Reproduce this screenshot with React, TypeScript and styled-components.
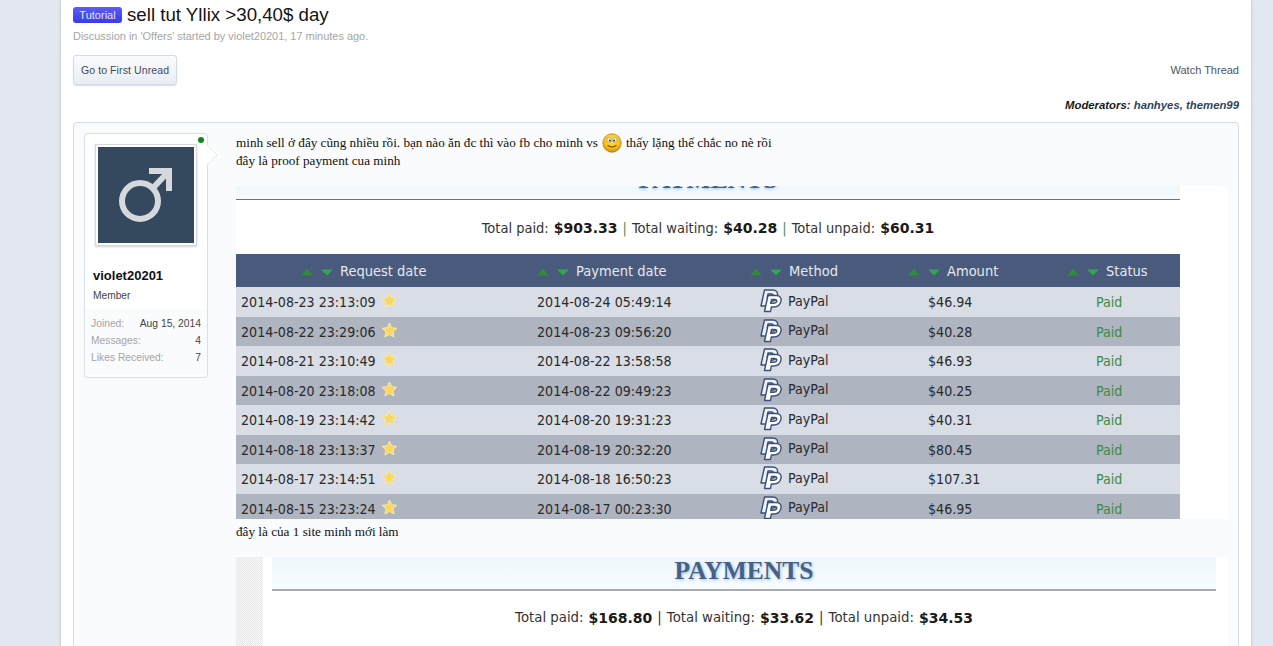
import React from 'react'
import styled, { createGlobalStyle } from 'styled-components'

const GlobalStyle = createGlobalStyle`
    html, body {
        margin: 0;
        height: 646px;
        overflow: hidden;
        background: #e2e7f0;
        font-family: "Liberation Sans", Arial, sans-serif;
    }
`;

const Page = styled.div`
    box-sizing: border-box;
    width: 1190px;
    height: 646px;
    margin-left: 61px;
    padding: 4px 12px 0;
    overflow: hidden;
    background: #fff;
    box-shadow: 0 0 3px rgba(140, 150, 175, 0.55);
`;

const TitleRow = styled.div`
    display: flex;
    align-items: center;
    gap: 5px;
    height: 22px;
`;

const Prefix = styled.span`
    box-sizing: border-box;
    width: 49px;
    height: 16px;
    border-radius: 3px;
    background: linear-gradient(#5c5cf6, #3a3aee);
    color: #e6e6ff;
    font-size: 11px;
    line-height: 16px;
    text-align: center;
`;

const Title = styled.h1`
    margin: 0;
    color: #141414;
    font-size: 18.7px;
    font-weight: normal;
`;

const Meta = styled.div`
    margin-top: 3px;
    color: #a5a5a5;
    font-size: 10.95px;
    line-height: 14px;
`;

const Actions = styled.div`
    display: flex;
    align-items: center;
    justify-content: space-between;
    margin-top: 12px;
`;

const Button = styled.button`
    box-sizing: border-box;
    width: 104px;
    height: 30px;
    padding: 0;
    border: 1px solid #d3dbe6;
    border-radius: 3px;
    background: linear-gradient(#fbfcfe, #e8edf4);
    box-shadow: 0 1px 1px rgba(150, 160, 180, 0.35);
    color: #3f4a5e;
    font-family: inherit;
    font-size: 10.5px;
    letter-spacing: 0.1px;
`;

const TextLink = styled.span`
    color: #4a5568;
    font-size: 11px;
`;

const Moderators = styled.div`
    margin-top: 13px;
    color: #1a1a1a;
    font-size: 11.35px;
    font-style: italic;
    font-weight: bold;
    line-height: 14px;
    text-align: right;

    span {
        color: #2f4560;
    }
`;

const Post = styled.div`
    display: flex;
    gap: 28px;
    box-sizing: border-box;
    height: 540px;
    margin-top: 10px;
    padding: 10px 10px 0;
    border: 1px solid #d3dbe6;
    border-radius: 4px;
    background: #f9fbfd;
`;

const UserCard = styled.div`
    position: relative;
    box-sizing: border-box;
    display: flex;
    flex-direction: column;
    flex: 0 0 124px;
    height: 245px;
    overflow: visible;
    border: 1px solid #d5e0ea;
    border-radius: 4px;
    background: #fff;
`;

const OnlineDot = styled.span`
    position: absolute;
    top: 3px;
    right: 3px;
    width: 6px;
    height: 6px;
    border-radius: 50%;
    background: #0a8a1a;
`;

const CardArrow = styled.svg`
    position: absolute;
    top: 11px;
    left: 122px;
    width: 11px;
    height: 22px;
`;

const Avatar = styled.div`
    box-sizing: border-box;
    width: 102px;
    height: 102px;
    margin: 10px 0 0 10px;
    padding: 2px;
    border: 1px solid #d5d9de;
    background: #fff;
    box-shadow: 0 1px 2px rgba(120, 130, 150, 0.35);

    svg {
        display: block;
        width: 96px;
        height: 96px;
    }
`;

const UserName = styled.div`
    margin: 22px 0 0 8px;
    color: #111;
    font-size: 13px;
    font-weight: bold;
    line-height: 15px;
`;

const UserTitle = styled.div`
    margin: 6px 0 0 8px;
    color: #444;
    font-size: 10.2px;
    line-height: 13px;
`;

const Stats = styled.dl`
    flex: 1;
    margin: 7px 0 3px;
    padding: 6px 6px 0;
    background: #fafbfd;
`;

const StatRow = styled.div`
    display: flex;
    justify-content: space-between;
    height: 17px;
    font-size: 10.3px;
    line-height: 17px;

    dt {
        color: #a5a5a5;
    }

    dd {
        margin: 0;
        color: #444;
    }
`;

const Message = styled.div`
    flex: 1;
    min-width: 0;
    color: #111;
    font-family: "Liberation Serif", "Times New Roman", serif;
    font-size: 13.2px;
    line-height: 17px;
`;

const Line = styled.div<{ $tall?: boolean; $top?: number }>`
    display: flex;
    align-items: center;
    gap: 4px;
    height: ${p => (p.$tall ? '19px' : '17px')};
    margin-top: ${p => p.$top ?? 0}px;
`;

const Shot = styled.div<{ $height: number; $top: number }>`
    width: 992px;
    height: ${p => p.$height}px;
    margin-top: ${p => p.$top}px;
    overflow: hidden;
    background: #fff;
`;

const FirstInner = styled.div`
    width: 944px;
`;

const ClippedHead = styled.div`
    height: 13px;
    overflow: hidden;
    border-bottom: 1px solid #5f7687;
    background: linear-gradient(#eef7fb, #f7fbfd);
    color: #4a5f85;
    font-family: "Liberation Serif", serif;
    font-size: 25.5px;
    font-weight: bold;
    line-height: 26px;
    text-align: center;
    text-shadow: 0 1px 3px #8fc0e0;

    span {
        display: block;
        margin-top: -19px;
    }
`;

const Totals = styled.div<{ $wide?: boolean }>`
    display: flex;
    justify-content: center;
    gap: 5px;
    color: #333;
    font-family: ${p => (p.$wide ? '"DejaVu Sans", Verdana, sans-serif' : '"DejaVu Sans Condensed", "DejaVu Sans", sans-serif')};
    font-size: ${p => (p.$wide ? '13.3px' : '14.5px')};
    line-height: 20px;

    b {
        color: #1a1a1a;
        font-family: "DejaVu Sans", Verdana, sans-serif;
        font-size: 14px;
    }

    i {
        color: ${p => (p.$wide ? '#333' : '#4d8a5c')};
        font-style: normal;
    }
`;

const TotalsSlot = styled.div<{ $pad: number }>`
    height: 54px;
    padding-top: ${p => p.$pad}px;
    box-sizing: border-box;
`;

const TableRow = styled.div<{ $kind: 'head' | 'odd' | 'even' }>`
    display: grid;
    grid-template-columns: 296px 213px 158px 159px 118px;
    align-items: center;
    height: ${p => (p.$kind === 'head' ? '33px' : '29.5px')};
    background: ${p => (p.$kind === 'head' ? '#4a5a7c' : p.$kind === 'odd' ? '#d8dde6' : '#aeb4c0')};
    color: ${p => (p.$kind === 'head' ? '#e4e9f0' : '#2a2a2a')};
    font-family: "DejaVu Sans Condensed", "DejaVu Sans", sans-serif;
    font-size: ${p => (p.$kind === 'head' ? '14.5px' : '14.1px')};
`;

const Cell = styled.div<{ $pad: number; $paid?: boolean; $lift?: boolean }>`
    display: flex;
    align-items: center;
    padding-left: ${p => p.$pad}px;
    margin-top: ${p => (p.$lift ? '-1px' : '2px')};
    color: ${p => (p.$paid ? '#3f8a45' : 'inherit')};
`;

const HeadCell = styled.div<{ $pad: number }>`
    display: flex;
    align-items: center;
    padding-top: 2px;
    padding-left: ${p => p.$pad}px;
`;

const SortArrows = styled.svg`
    width: 32px;
    height: 10px;
    margin: 0 7px 0 0;
    filter: blur(0.3px);
`;

const Star = styled.svg`
    width: 17px;
    height: 16px;
    margin: -5px 0 0 5px;
`;

const PayPalMark = styled.svg`
    width: 23px;
    height: 24px;
    margin-right: 6px;
`;

const SecondShot = styled.div`
    display: flex;
    height: 89px;
`;

const Stripe = styled.div`
    flex: 0 0 27px;
    background: repeating-conic-gradient(#e8e8e8 0 25%, #f8f8f8 0 50%) 0 0 / 2px 2px;
`;

const SecondInner = styled.div`
    width: 944px;
    margin-left: 9px;
`;

const PaymentsHead = styled.div`
    box-sizing: border-box;
    height: 34px;
    border-bottom: 2px solid #a6abb5;
    background: linear-gradient(#eef7fb, #f7fbfd);
    color: #4a5f85;
    font-family: "Liberation Serif", serif;
    font-size: 25.5px;
    font-weight: bold;
    line-height: 27px;
    text-align: center;
    text-shadow: 1px 1px 3px #8fc0e0;
`;

const rows = [
    ['2014-08-23 23:13:09', '2014-08-24 05:49:14', '$46.94'],
    ['2014-08-22 23:29:06', '2014-08-23 09:56:20', '$40.28'],
    ['2014-08-21 23:10:49', '2014-08-22 13:58:58', '$46.93'],
    ['2014-08-20 23:18:08', '2014-08-22 09:49:23', '$40.25'],
    ['2014-08-19 23:14:42', '2014-08-20 19:31:23', '$40.31'],
    ['2014-08-18 23:13:37', '2014-08-19 20:32:20', '$80.45'],
    ['2014-08-17 23:14:51', '2014-08-18 16:50:23', '$107.31'],
    ['2014-08-15 23:23:24', '2014-08-17 00:23:30', '$46.95'],
];

const heads: [string, number][] = [
    ['Request date', 65],
    ['Payment date', 5],
    ['Method', 5],
    ['Amount', 5],
    ['Status', 5],
];

function Smiley() {
    return (
        <svg width="20" height="20" viewBox="0 0 20 20">
            <defs>
                <radialGradient id="face" cx="50%" cy="35%" r="65%">
                    <stop offset="0%" stopColor="#ffe95a" />
                    <stop offset="70%" stopColor="#f5bc14" />
                    <stop offset="100%" stopColor="#c98a10" />
                </radialGradient>
            </defs>
            <circle cx="10" cy="10" r="9.2" fill="url(#face)" stroke="#b9851c" strokeWidth="0.8" />
            <ellipse cx="7.4" cy="7" rx="2.5" ry="2.2" fill="#fff" stroke="#8a6a20" strokeWidth="0.5" />
            <ellipse cx="12.6" cy="7" rx="2.5" ry="2.2" fill="#fff" stroke="#8a6a20" strokeWidth="0.5" />
            <circle cx="7.8" cy="7.4" r="1" fill="#3a2a10" />
            <circle cx="12.2" cy="7.4" r="1" fill="#3a2a10" />
            <path d="M6 12.5q4 3 8 0" fill="none" stroke="#7a5410" strokeWidth="1.2" strokeLinecap="round" />
        </svg>
    )
}

function Arrows() {
    return (
        <SortArrows viewBox="0 0 32 10">
            <path d="M6 1.5 12 8.5H0Z" fill="#2f8a3c" />
            <path d="M20 2.5H32L26 8.5Z" fill="#2fa84a" />
        </SortArrows>
    )
}

function GoldStar() {
    return (
        <Star viewBox="0 0 24 24">
            <path d="M12 1.5 15.3 8.6 23 9.5 17.2 14.7 18.9 22.5 12 18.5 5.1 22.5 6.8 14.7 1 9.5 8.7 8.6Z" fill="#f8d860" stroke="#fbe9a8" strokeWidth="1.5" />
        </Star>
    )
}

const paypalP = 'M5.5 1H13.5C17.5 1 19.2 3.4 18.4 6.8C17.6 10.4 14.8 12.5 11 12.5H8.8L8 17H2ZM9 5 8.2 8.8H10.6C12.6 8.8 14 8 14.3 6.6C14.5 5.6 13.7 5 12.4 5Z'

function PayPal() {
    return (
        <PayPalMark viewBox="0 0 23 24">
            <path d={paypalP} fill="#eef1f7" fillRule="evenodd" stroke="#3c4f78" strokeWidth="1.4" strokeLinejoin="round" />
            <path d={paypalP} transform="translate(3.5 5.5)" fill="#fff" fillRule="evenodd" stroke="#3c4f78" strokeWidth="1.4" strokeLinejoin="round" />
        </PayPalMark>
    )
}

export default function App() {
    return (
        <>
            <GlobalStyle />
            <Page>
                <TitleRow>
                    <Prefix>Tutorial</Prefix>
                    <Title>sell tut Yllix &gt;30,40$ day</Title>
                </TitleRow>
                <Meta>Discussion in 'Offers' started by violet20201, 17 minutes ago.</Meta>
                <Actions>
                    <Button>Go to First Unread</Button>
                    <TextLink>Watch Thread</TextLink>
                </Actions>
                <Moderators>Moderators: <span>hanhyes, themen99</span></Moderators>
                <Post>
                    <UserCard>
                        <OnlineDot />
                        <CardArrow viewBox="0 0 11 22">
                            <path d="M0 0 10 10 0 20" fill="#fff" stroke="#e3eaf1" />
                        </CardArrow>
                        <Avatar>
                            <svg viewBox="0 0 96 96">
                                <rect width="96" height="96" fill="#34495e" />
                                <circle cx="42" cy="54" r="18" fill="none" stroke="#d5d8dc" strokeWidth="6" />
                                <path d="M55 41 71 24M51 24H71V44" fill="none" stroke="#d5d8dc" strokeWidth="6" />
                            </svg>
                        </Avatar>
                        <UserName>violet20201</UserName>
                        <UserTitle>Member</UserTitle>
                        <Stats>
                            <StatRow><dt>Joined:</dt><dd>Aug 15, 2014</dd></StatRow>
                            <StatRow><dt>Messages:</dt><dd>4</dd></StatRow>
                            <StatRow><dt>Likes Received:</dt><dd>7</dd></StatRow>
                        </Stats>
                    </UserCard>
                    <Message>
                        <Line $tall>minh sell ở đây cũng nhiều rồi. bạn nào ăn đc thì vào fb cho minh vs <Smiley /> thấy lặng thế chắc no nè rồi</Line>
                        <Line>đây là proof payment cua minh</Line>
                        <Shot $height={333} $top={17}>
                            <FirstInner>
                                <ClippedHead><span>PAYMENTS</span></ClippedHead>
                                <TotalsSlot $pad={18}>
                                    <Totals>
                                        Total paid: <b>$903.33</b> <i>|</i> Total waiting: <b>$40.28</b> <i>|</i> Total unpaid: <b>$60.31</b>
                                    </Totals>
                                </TotalsSlot>
                                <TableRow $kind="head">
                                    {heads.map(([label, pad]) => (
                                        <HeadCell key={label} $pad={pad}><Arrows />{label}</HeadCell>
                                    ))}
                                </TableRow>
                                {rows.map((row, i) => (
                                    <TableRow key={row[0]} $kind={i % 2 === 0 ? 'odd' : 'even'}>
                                        <Cell $pad={5}>{row[0]}<GoldStar /></Cell>
                                        <Cell $pad={5}>{row[1]}</Cell>
                                        <Cell $pad={14} $lift><PayPal />PayPal</Cell>
                                        <Cell $pad={25}>{row[2]}</Cell>
                                        <Cell $pad={34} $paid>Paid</Cell>
                                    </TableRow>
                                ))}
                            </FirstInner>
                        </Shot>
                        <Line $top={4}>đây là của 1 site minh mới làm</Line>
                        <Shot $height={89} $top={17}>
                            <SecondShot>
                                <Stripe />
                                <SecondInner>
                                    <PaymentsHead>PAYMENTS</PaymentsHead>
                                    <TotalsSlot $pad={17}>
                                        <Totals $wide>
                                            Total paid: <b>$168.80</b> <i>|</i> Total waiting: <b>$33.62</b> <i>|</i> Total unpaid: <b>$34.53</b>
                                        </Totals>
                                    </TotalsSlot>
                                </SecondInner>
                            </SecondShot>
                        </Shot>
                    </Message>
                </Post>
            </Page>
        </>
    )
}
